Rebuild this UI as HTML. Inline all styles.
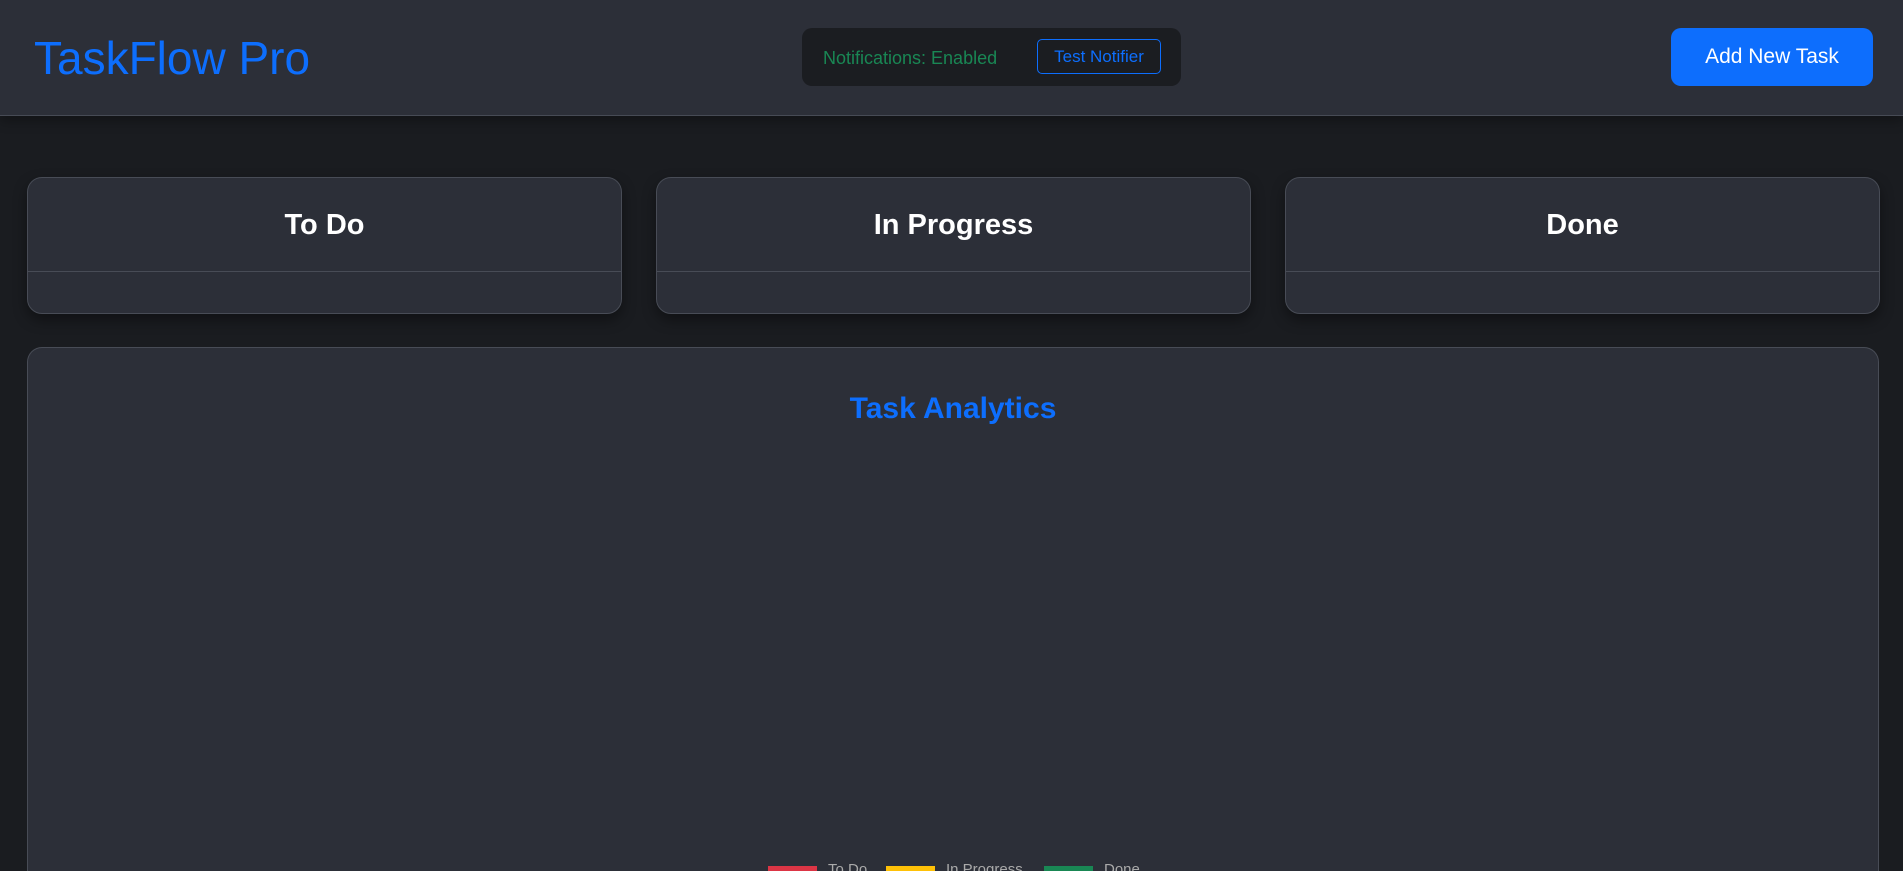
<!DOCTYPE html>
<html><head><meta charset="utf-8"><style>
*{box-sizing:border-box;margin:0;padding:0}
html,body{width:1903px;height:871px;overflow:hidden;background:#1a1c20;font-family:"Liberation Sans",sans-serif;position:relative}
.hdr{position:absolute;left:0;top:0;width:1903px;height:116px;background:#2c2f38;border-bottom:1px solid #474b55;box-shadow:0 4px 12px rgba(0,0,0,.35)}
.logo{position:absolute;left:34px;top:30px;font-size:46px;color:#0d6efd;line-height:56px}
.notif{position:absolute;left:802px;top:28px;width:379px;height:58px;background:#1b1d21;border-radius:10px}
.notif span{position:absolute;left:21px;top:20px;font-size:18px;color:#198754}
.notif .tb{position:absolute;left:235px;top:11px;width:124px;height:35px;border:1px solid #0d6efd;border-radius:5px;color:#0d6efd;font-size:17px;text-align:center;line-height:33px}
.add{position:absolute;left:1671px;top:28px;width:202px;height:58px;background:#0d6efd;border-radius:10px;color:#fff;font-size:21px;text-align:center;line-height:58px}
.col{position:absolute;top:177px;width:595px;height:137px;background:#2c2f38;border:1px solid #484c56;border-radius:15px;box-shadow:0 6px 14px rgba(0,0,0,.4)}
.col h2{height:94px;border-bottom:1px solid #484c56;text-align:center;line-height:94px;color:#fff;font-size:29px;font-weight:bold}
.an{position:absolute;left:27px;top:347px;width:1852px;height:524px;background:#2c2f38;border:1px solid #484c56;border-bottom:none;border-radius:15px 15px 0 0}
.an h3{position:absolute;left:0;right:0;top:44px;text-align:center;color:#0d6efd;font-size:30px;font-weight:bold}
.lg{position:absolute;top:866px;height:5px}
.lt{position:absolute;top:861px;height:10px;overflow:hidden;color:#aaa;font-size:15px;line-height:17px}
</style></head><body>
<div class="hdr">
<div class="logo">TaskFlow Pro</div>
<div class="notif"><span>Notifications: Enabled</span><div class="tb">Test Notifier</div></div>
<div class="add">Add New Task</div>
</div>
<div class="col" style="left:27px"><h2>To Do</h2></div>
<div class="col" style="left:656px"><h2>In Progress</h2></div>
<div class="col" style="left:1285px"><h2>Done</h2></div>
<div class="an"><h3>Task Analytics</h3></div>
<div class="lg" style="left:768px;width:49px;background:#dc3545"></div>
<div class="lt" style="left:828px">To Do</div>
<div class="lg" style="left:886px;width:49px;background:#ffc107"></div>
<div class="lt" style="left:946px">In Progress</div>
<div class="lg" style="left:1044px;width:49px;background:#198754"></div>
<div class="lt" style="left:1104px">Done</div>
</body></html>
